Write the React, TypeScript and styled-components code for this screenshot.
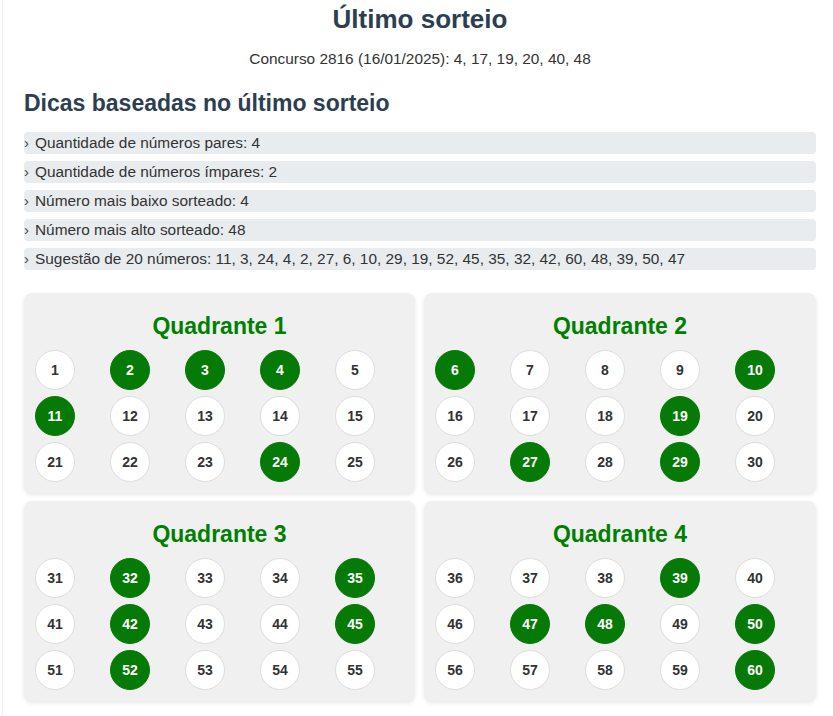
import styled, { createGlobalStyle } from "styled-components"

const GlobalStyle = createGlobalStyle`
  body {
    margin: 0;
    background: #ffffff;
    font-family: "Liberation Sans", Arial, sans-serif;
    color: #333333;
  }
`

const ultimo = { concurso: 2816, data: "16/01/2025", numeros: [4, 17, 19, 20, 40, 48] }
const sugestao = [11, 3, 24, 4, 2, 27, 6, 10, 29, 19, 52, 45, 35, 32, 42, 60, 48, 39, 50, 47]

const dicas = [
  "Quantidade de números pares: 4",
  "Quantidade de números ímpares: 2",
  "Número mais baixo sorteado: 4",
  "Número mais alto sorteado: 48",
  `Sugestão de 20 números: ${sugestao.join(", ")}`,
]

const quadrantes = [
  { nome: "Quadrante 1", rows: [[1, 2, 3, 4, 5], [11, 12, 13, 14, 15], [21, 22, 23, 24, 25]] },
  { nome: "Quadrante 2", rows: [[6, 7, 8, 9, 10], [16, 17, 18, 19, 20], [26, 27, 28, 29, 30]] },
  { nome: "Quadrante 3", rows: [[31, 32, 33, 34, 35], [41, 42, 43, 44, 45], [51, 52, 53, 54, 55]] },
  { nome: "Quadrante 4", rows: [[36, 37, 38, 39, 40], [46, 47, 48, 49, 50], [56, 57, 58, 59, 60]] },
]

export default function App() {
  return (
    <>
      <GlobalStyle />
      <Page>
        <Title>Último sorteio</Title>
        <Subtitle>
          Concurso {ultimo.concurso} ({ultimo.data}): {ultimo.numeros.join(", ")}
        </Subtitle>
        <SectionTitle>Dicas baseadas no último sorteio</SectionTitle>
        <TipList>
          {dicas.map((d, i) => (
            <Tip key={i}>
              <Chevron>›</Chevron>
              {d}
            </Tip>
          ))}
        </TipList>
        <QuadGrid>
          {quadrantes.map((q) => (
            <Card key={q.nome}>
              <CardTitle>{q.nome}</CardTitle>
              <Balls>
                {q.rows.flat().map((n) => (
                  <Ball key={n} $on={sugestao.includes(n)}>
                    {n}
                  </Ball>
                ))}
              </Balls>
            </Card>
          ))}
        </QuadGrid>
      </Page>
    </>
  )
}

const Page = styled.main`
  margin-left: 2px;
  border-left: 1px solid #f0f0f0;
  padding: 4px 17px 20px 21px;
  min-height: 700px;
`

const Title = styled.h1`
  margin: 0;
  text-align: center;
  font-size: 26px;
  line-height: 30px;
  font-weight: bold;
  color: #2c3e50;
`

const Subtitle = styled.p`
  margin: 16px 0 0;
  text-align: center;
  font-size: 15.4px;
  line-height: 18px;
  color: #333333;
`

const SectionTitle = styled.h2`
  margin: 22px 0 0;
  font-size: 23px;
  line-height: 26px;
  font-weight: bold;
  color: #2c3e50;
`

const TipList = styled.ul`
  list-style: none;
  margin: 16px 0 0;
  padding: 0;
  display: flex;
  flex-direction: column;
  gap: 7px;
`

const Tip = styled.li`
  background: #e9ecef;
  border-radius: 4px;
  height: 22px;
  line-height: 22px;
  font-size: 15.4px;
  color: #333333;
  white-space: nowrap;
`

const Chevron = styled.span`
  display: inline-block;
  width: 11px;
  font-size: 15px;
  color: #444444;
`

const QuadGrid = styled.section`
  margin-top: 23px;
  display: grid;
  grid-template-columns: 391px 392px;
  column-gap: 9px;
  row-gap: 8px;
`

const Card = styled.div`
  background: #f0f0f0;
  border-radius: 8px;
  box-shadow: 0 2px 4px rgba(0, 0, 0, 0.1);
  padding: 20px 11px 12px;
  height: 200px;
  box-sizing: border-box;
`

const CardTitle = styled.h3`
  margin: 0 0 11px;
  text-align: center;
  font-size: 23px;
  line-height: 26px;
  font-weight: bold;
  color: #008000;
`

const Balls = styled.div`
  display: grid;
  grid-template-columns: repeat(5, 40px);
  column-gap: 35px;
  row-gap: 6px;
`

const Ball = styled.div<{ $on: boolean }>`
  width: 40px;
  height: 40px;
  box-sizing: border-box;
  border-radius: 50%;
  display: flex;
  align-items: center;
  justify-content: center;
  font-size: 14px;
  font-weight: bold;
  background: ${(p) => (p.$on ? "#067a06" : "#ffffff")};
  color: ${(p) => (p.$on ? "#ffffff" : "#333333")};
  border: 1px solid ${(p) => (p.$on ? "#067a06" : "#dddddd")};
`
